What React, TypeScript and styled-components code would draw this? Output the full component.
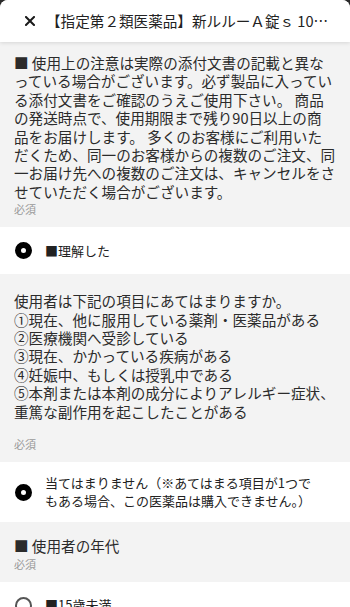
import styled, { createGlobalStyle } from "styled-components";

const GlobalStyle = createGlobalStyle`
  html, body {
    margin: 0;
    padding: 0;
    background: #2a2a2a;
  }
  * {
    box-sizing: border-box;
  }
`;

const Sheet = styled.div`
  height: 607px;
  overflow: hidden;
  border-radius: 8px 8px 0 0;
  background: #ffffff;
  font-family: "Noto Sans CJK JP", "Noto Sans", sans-serif;
  color: #2b2b2b;
  display: flex;
  flex-direction: column;
`;

const Header = styled.header`
  height: 42px;
  flex-shrink: 0;
  display: flex;
  align-items: center;
  gap: 11px;
  padding: 0 20px 0 25px;
  background: #ffffff;
  position: relative;
  z-index: 1;
  box-shadow: 0 1px 4px rgba(0, 0, 0, 0.12);
`;

const CloseButton = styled.button`
  width: 10px;
  height: 10px;
  padding: 0;
  border: 0;
  background: none;
  display: flex;
  flex-shrink: 0;
`;

const Title = styled.h1`
  flex: 1;
  min-width: 0;
  margin: 0;
  font-size: 14.6px;
  font-weight: 400;
  line-height: 20px;
  color: #222;
  white-space: nowrap;
  overflow: hidden;
  text-overflow: ellipsis;
`;

const Body = styled.main`
  flex: 1;
  overflow: hidden;
`;

const Section = styled.section<{ $top: number }>`
  background: #f3f3f3;
  padding: ${(p) => p.$top}px 14px 10px;
`;

const Notice = styled.p`
  margin: 0;
  font-size: 14.6px;
  line-height: 18.4px;
  white-space: pre-line;
  color: #2b2b2b;
`;

const Required = styled.span<{ $spaced?: boolean }>`
  display: block;
  margin-top: ${(p) => (p.$spaced ? 15 : 0)}px;
  font-size: 11px;
  line-height: 16px;
  color: #999;
`;

const OptionRow = styled.label`
  min-height: 47px;
  display: flex;
  align-items: center;
  gap: 13px;
  padding: 12px 30px 12px 15px;
  background: #ffffff;
`;

const Radio = styled.span<{ $checked?: boolean }>`
  width: 17px;
  height: 17px;
  flex-shrink: 0;
  border-radius: 50%;
  border: ${(p) => (p.$checked ? "6px solid #000" : "2px solid #555")};
  background: #fff;
`;

const OptionText = styled.span`
  font-size: 13px;
  line-height: 18px;
  color: #222;
`;

const CloseIcon = () => (
  <svg width="10" height="10" viewBox="0 0 10 10">
    <path d="M1 1L9 9M9 1L1 9" stroke="#1a1a1a" strokeWidth="2" strokeLinecap="square" />
  </svg>
);

const usageNotice =
  "■ 使用上の注意は実際の添付文書の記載と異なっている場合がございます。必ず製品に入っている添付文書をご確認のうえご使用下さい。 商品の発送時点で、使用期限まで残り90日以上の商品をお届けします。 多くのお客様にご利用いただくため、同一のお客様からの複数のご注文、同一お届け先への複数のご注文は、キャンセルをさせていただく場合がございます。";

const checklist = [
  "使用者は下記の項目にあてはまりますか。",
  "①現在、他に服用している薬剤・医薬品がある",
  "②医療機関へ受診している",
  "③現在、かかっている疾病がある",
  "④妊娠中、もしくは授乳中である",
  "⑤本剤または本剤の成分によりアレルギー症状、重篤な副作用を起こしたことがある",
].join("\n");

export default function App() {
  return (
    <>
      <GlobalStyle />
      <Sheet>
        <Header>
          <CloseButton aria-label="閉じる">
            <CloseIcon />
          </CloseButton>
          <Title>【指定第２類医薬品】新ルルーＡ錠ｓ 100錠</Title>
        </Header>
        <Body>
          <Section $top={12}>
            <Notice>{usageNotice}</Notice>
            <Required>必須</Required>
          </Section>
          <OptionRow>
            <Radio $checked />
            <OptionText>■理解した</OptionText>
          </OptionRow>
          <Section $top={18}>
            <Notice>{checklist}</Notice>
            <Required $spaced>必須</Required>
          </Section>
          <OptionRow>
            <Radio $checked />
            <OptionText>当てはまりません（※あてはまる項目が1つでもある場合、この医薬品は購入できません。）</OptionText>
          </OptionRow>
          <Section $top={15}>
            <Notice>■ 使用者の年代</Notice>
            <Required>必須</Required>
          </Section>
          <OptionRow>
            <Radio />
            <OptionText>■15歳未満</OptionText>
          </OptionRow>
        </Body>
      </Sheet>
    </>
  );
}
